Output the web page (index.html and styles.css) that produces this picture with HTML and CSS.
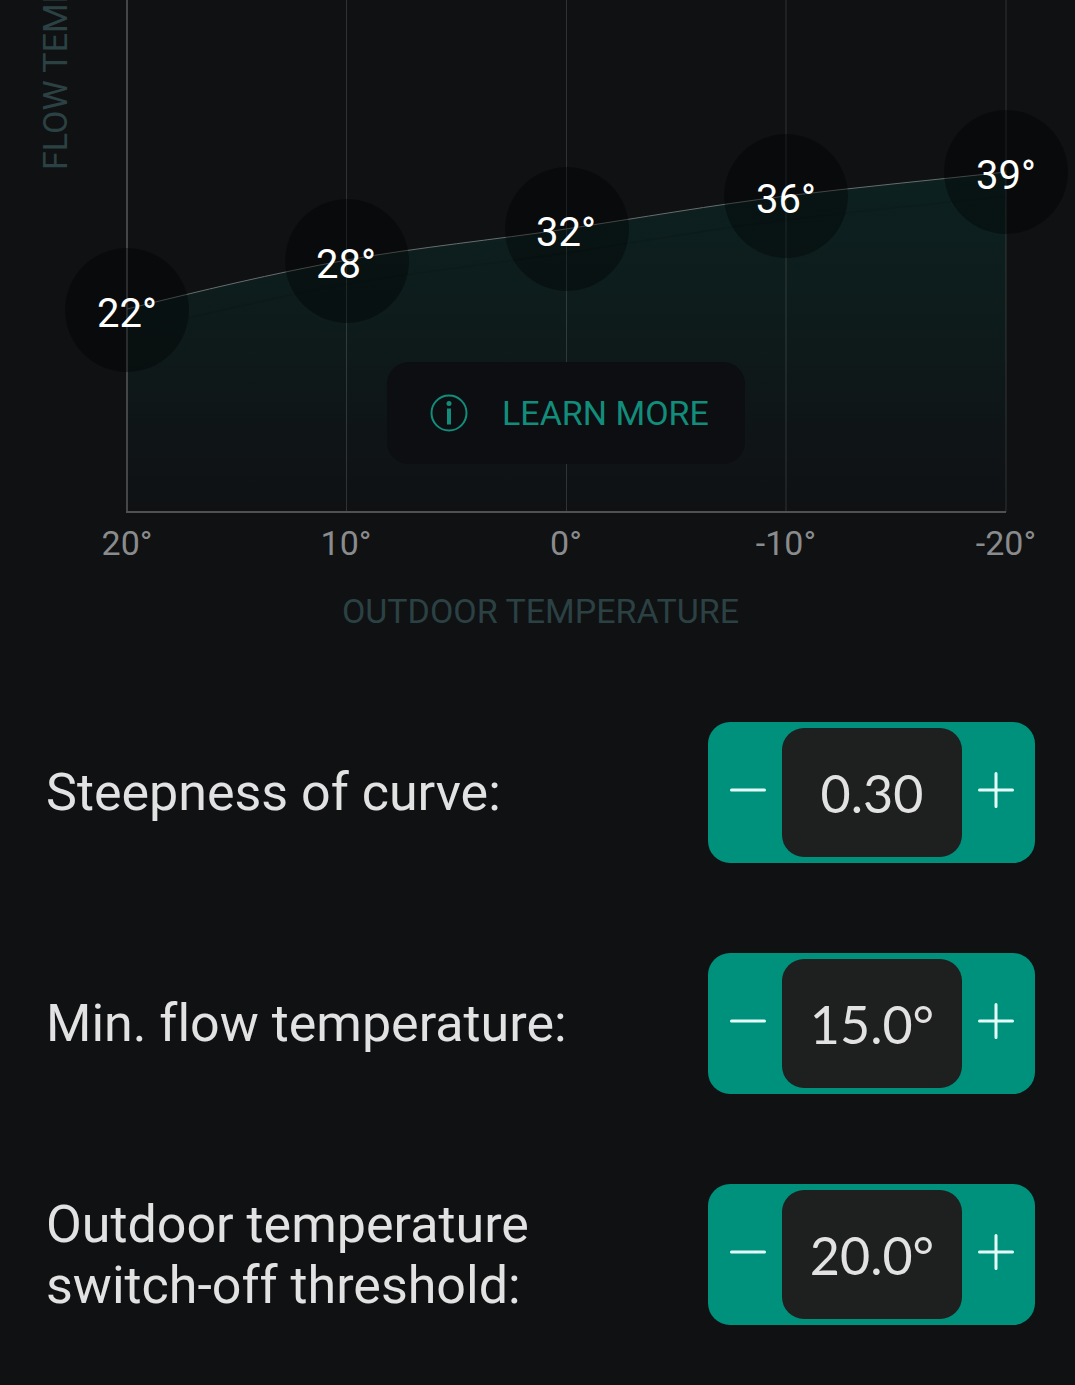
FILE: index.html
```html
<!DOCTYPE html>
<html lang="en">
<head>
<meta charset="utf-8">
<meta name="viewport" content="width=device-width, initial-scale=1">
<title>Heating curve</title>
<link rel="stylesheet" href="styles.css">
</head>
<body>
<main class="page">
  <section class="chart">
    <div class="plot">
      <svg class="plot-svg" viewBox="0 0 1075 570" role="img" aria-label="Flow temperature by outdoor temperature">
        <defs>
          <linearGradient id="fill" gradientUnits="userSpaceOnUse" x1="0" y1="172" x2="0" y2="512">
            <stop offset="0" stop-color="#0c2120"/>
            <stop offset="0.45" stop-color="#0e1b1b"/>
            <stop offset="0.8" stop-color="#0f1416"/>
            <stop offset="1" stop-color="#0f1113"/>
          </linearGradient>
        </defs>
        <path fill="url(#fill)" d="M127 309C200 291 274 273 347 260C420 247 493 240 566 229C639 218 713 205 786 196C859 187 933 180 1006 172V512H127Z"/>
        <path class="curve-shadow" d="M127 333C200 315 274 297 347 284C420 271 493 264 566 253C639 242 713 229 786 220C859 211 933 204 1006 196"/>
        <path class="grid-line" d="M346.500 0V512M566.500 0V512M786 0V512M1006 0V512"/>
        <path class="axis-line" d="M127 0V512"/>
        <path class="base-line" d="M126 512H1006"/>
        <path class="curve" d="M127 309C200 291 274 273 347 260C420 247 493 240 566 229C639 218 713 205 786 196C859 187 933 180 1006 172"/>
        <g class="point">
          <circle cx="127" cy="310" r="62"/><circle cx="347" cy="261" r="62"/><circle cx="567" cy="229" r="62"/><circle cx="786" cy="196" r="62"/><circle cx="1006" cy="172" r="62"/>
        </g>
        <g class="point-label">
          <text x="127" y="327">22°</text><text x="346" y="278">28°</text><text x="566" y="246">32°</text><text x="786" y="213">36°</text><text x="1006" y="189">39°</text>
        </g>
        <g class="tick">
          <text x="127" y="555">20°</text><text x="346" y="555">10°</text><text x="566" y="555">0°</text><text x="786" y="555">-10°</text><text x="1006" y="555">-20°</text>
        </g>
        <text class="axis-title" transform="translate(67 170) rotate(-90)">FLOW TEMPERATURE</text>
      </svg>
      <button class="learn" type="button">
        <svg class="learn-icon" viewBox="0 0 38 38" aria-hidden="true">
          <circle cx="19" cy="19" r="17.500" fill="none" stroke="currentColor" stroke-width="2"/>
          <circle cx="19" cy="9.500" r="2.500" fill="currentColor"/>
          <path d="M19 14.500V30.500" stroke="currentColor" stroke-width="4"/>
        </svg>
        LEARN MORE
      </button>
    </div>
    <p class="x-title">OUTDOOR TEMPERATURE</p>
  </section>

  <form class="settings">
    <div class="row">
      <label for="steepness">Steepness of curve:</label>
      <div class="stepper">
        <button class="minus" type="button" aria-label="Decrease steepness"><svg viewBox="0 0 36 36"><path d="M1.500 18H34.500"/></svg></button>
        <input id="steepness" type="text" inputmode="decimal" value="0.30">
        <button class="plus" type="button" aria-label="Increase steepness"><svg viewBox="0 0 36 36"><path d="M1.500 18H34.500M18 1.500V34.500"/></svg></button>
      </div>
    </div>
    <div class="row">
      <label for="minflow">Min. flow temperature:</label>
      <div class="stepper">
        <button class="minus" type="button" aria-label="Decrease minimum flow temperature"><svg viewBox="0 0 36 36"><path d="M1.500 18H34.500"/></svg></button>
        <input id="minflow" type="text" inputmode="decimal" value="15.0°">
        <button class="plus" type="button" aria-label="Increase minimum flow temperature"><svg viewBox="0 0 36 36"><path d="M1.500 18H34.500M18 1.500V34.500"/></svg></button>
      </div>
    </div>
    <div class="row">
      <label for="threshold">Outdoor temperature switch-off threshold:</label>
      <div class="stepper">
        <button class="minus" type="button" aria-label="Decrease switch-off threshold"><svg viewBox="0 0 36 36"><path d="M1.500 18H34.500"/></svg></button>
        <input id="threshold" type="text" inputmode="decimal" value="20.0°">
        <button class="plus" type="button" aria-label="Increase switch-off threshold"><svg viewBox="0 0 36 36"><path d="M1.500 18H34.500M18 1.500V34.500"/></svg></button>
      </div>
    </div>
  </form>
</main>
</body>
</html>
```
FILE: styles.css
```css
* { box-sizing: border-box; }

body {
  margin: 0;
  background: #0f1113;
  color: #e2e2e2;
  font-family: Roboto, "Liberation Sans", sans-serif;
}

.plot { position: relative; }

.plot-svg {
  display: block;
  width: 100%;
  height: auto;
}

.grid-line { stroke: #fff; stroke-opacity: 0.14; fill: none; }
.axis-line { stroke: #444647; stroke-width: 2; }
.base-line { stroke: #505152; stroke-width: 2; }
.curve { fill: none; stroke: #686c6c; stroke-width: 1; }
.curve-shadow { fill: none; stroke: #000; stroke-opacity: 0.07; stroke-width: 2; }
.point { fill: #000; fill-opacity: 0.36; }
.point-label { fill: #fff; font-size: 40px; text-anchor: middle; }
.tick { fill: #8a8b8c; font-size: 34px; text-anchor: middle; }
.axis-title { fill: #2b4143; font-size: 34px; }

.learn {
  position: absolute;
  top: 63.5%;
  left: 36%;
  display: flex;
  align-items: center;
  gap: 34px;
  height: 102px;
  padding: 0 36px 0 43px;
  border: 0;
  border-radius: 22px;
  background: #0c0e11;
  color: #128d7b;
  font: 34px Roboto, "Liberation Sans", sans-serif;
  white-space: nowrap;
}

.learn-icon { width: 38px; height: 38px; }

.x-title {
  margin: 21px 0 0;
  padding-left: 6px;
  color: #2b4143;
  font-size: 34px;
  line-height: 40px;
  text-align: center;
}

.settings {
  display: flex;
  flex-direction: column;
  gap: 90px;
  padding: 91px 40px 60px 46px;
}

.row {
  display: flex;
  align-items: center;
  justify-content: space-between;
  gap: 40px;
}

.row label {
  max-width: 560px;
  font-size: 52px;
  line-height: 61px;
  font-variant-ligatures: none;
}

.stepper {
  display: flex;
  flex: none;
  width: 327px;
  height: 141px;
  padding: 6px 0;
  border-radius: 22px;
  background: #00917d;
}

.stepper button {
  display: flex;
  flex: 1;
  align-items: center;
  justify-content: center;
  padding: 0 0 5px;
  border: 0;
  background: none;
}

.stepper .minus { padding-left: 6px; }
.stepper .plus { padding-right: 5px; }

.stepper svg {
  width: 36px;
  height: 36px;
  fill: none;
  stroke: #e4fffa;
  stroke-width: 3;
  stroke-linecap: round;
}

.stepper input {
  width: 180px;
  padding: 0;
  border: 0;
  border-radius: 22px;
  background: #1e201f;
  color: #e2e2e2;
  font: 52px Lato, "Liberation Sans", sans-serif;
  text-align: center;
}
```
